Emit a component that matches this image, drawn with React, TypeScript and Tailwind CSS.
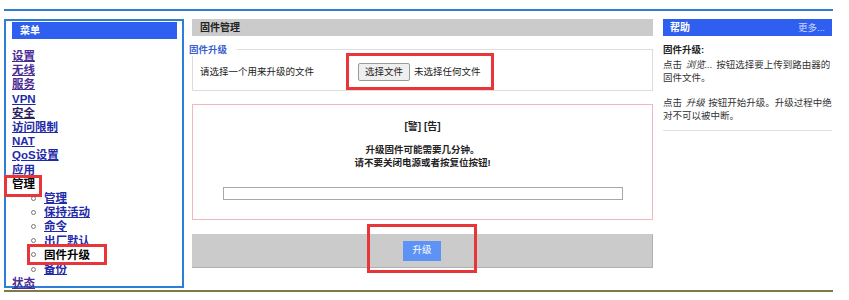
import React from "react";

interface MenuItem {
  label: string;
  color: string;
}

const topItems: MenuItem[] = [
  { label: "设置", color: "text-[#4a2d94]" },
  { label: "无线", color: "text-[#4a2d94]" },
  { label: "服务", color: "text-[#4a2d94]" },
  { label: "VPN", color: "text-[#1f2aa8]" },
  { label: "安全", color: "text-[#2e1f5e]" },
  { label: "访问限制", color: "text-[#1f2aa8]" },
  { label: "NAT", color: "text-[#1f2aa8]" },
  { label: "QoS设置", color: "text-[#1f2aa8]" },
  { label: "应用", color: "text-[#1f2aa8]" },
];

const subItems = ["管理", "保持活动", "命令", "出厂默认", "固件升级", "备份"];

const font = "font-['Liberation_Sans','Noto_Sans_CJK_SC',sans-serif]";

const Sidebar = () => {
  return (
    <div className="w-[180px] h-[269px] ml-[4px] border-2 border-[#2b7fd6] pl-[6px] pr-[5px] pt-[1px]">
      <div className="h-[17px] bg-[#2f5ff0] text-white font-bold text-[10px] leading-[17px] pl-[8px]">
        菜单
      </div>
      <ul className="mt-[10px] text-[11.5px] leading-[14.2px] font-bold">
        {topItems.map((item) => (
          <li key={item.label}>
            <a href="#" className={`underline ${item.color}`}>
              {item.label}
            </a>
          </li>
        ))}
        <li className="text-black">管理</li>
        {subItems.map((s) => (
          <li key={s} className="flex items-center">
            <span className="ml-[19px] w-[5px] h-[5px] rounded-full border border-[#777]" />
            {s === "固件升级" ? (
              <span className="ml-[8px] text-black">{s}</span>
            ) : (
              <a href="#" className="ml-[8px] underline text-[#1f2aa8]">
                {s}
              </a>
            )}
          </li>
        ))}
        <li>
          <a href="#" className="underline text-[#4a2d94]">
            状态
          </a>
        </li>
      </ul>
    </div>
  );
};

const Main = () => {
  return (
    <div className="w-[461px] ml-[8px] text-[9.5px] text-[#222]">
      <div className="h-[17px] bg-[#cbcbcb] font-bold text-[10px] leading-[17px] pl-[8px]">
        固件管理
      </div>
      <fieldset className="mt-[7px] h-[48px] border border-[#dcdcdc] px-[7px]">
        <legend className="-ml-[11px] pr-[10px] leading-[13px] font-bold text-[#3a5fd0]">
          固件升级
        </legend>
        <div className="flex items-center h-[18px] mt-[7px]">
          <span className="w-[158px]">请选择一个用来升级的文件</span>
          <button className="h-[18px] px-[6px] bg-[#efefef] border border-[#9a9a9a] rounded-[2px] text-[9.5px] text-[#222]">
            选择文件
          </button>
          <span className="ml-[4px]">未选择任何文件</span>
        </div>
      </fieldset>
      <div className="mt-[13px] h-[116px] border border-[#f2b6c0] flex flex-col items-center pt-[15px]">
        <div className="font-bold text-[10px] leading-[13px]">[警] [告]</div>
        <div className="mt-[10px] font-bold leading-[13px] text-center">
          <div>升级固件可能需要几分钟。</div>
          <div>请不要关闭电源或者按复位按钮!</div>
        </div>
        <div className="mt-[18px] w-[400px] h-[13px] border border-[#a8a8a8] bg-white" />
      </div>
      <div className="mt-[14px] h-[34px] bg-[#cbcbcb] border-b border-r border-[#b0b0b0] flex items-center justify-center">
        <button className="w-[38px] h-[20px] bg-[#5c93f5] text-white text-[9.5px]">
          升级
        </button>
      </div>
    </div>
  );
};

const Help = () => {
  return (
    <div className="w-[169px] ml-[10px] text-[9.5px] text-[#333] leading-[13px]">
      <div className="h-[17px] bg-[#2f5ff0] flex items-center justify-between px-[7px]">
        <span className="text-white font-bold text-[10px]">帮助</span>
        <span className="text-[#c9d6ff]">更多...</span>
      </div>
      <div className="mt-[7px] font-bold text-[#222]">固件升级:</div>
      <p className="mt-[2px]">
        点击 <i className="px-[1px]">浏览...</i> 按钮选择要上传到路由器的固件文件。
      </p>
      <p className="mt-[12px] pb-[8px] border-b border-[#e2e2e2]">
        点击 <i className="px-[1px]">升级</i> 按钮开始升级。升级过程中绝对不可以被中断。
      </p>
    </div>
  );
};

const App = () => {
  return (
    <div className={`relative w-[849px] h-[300px] bg-white overflow-hidden ${font}`}>
      <div className="ml-[4px] mt-[9px] w-[829px] h-[2px] bg-[#2f7fd0]" />
      <div className="flex mt-[8px]">
        <Sidebar />
        <Main />
        <Help />
      </div>
      <div className="ml-[4px] mt-[2px] w-[829px] h-[2px] bg-[#7a7a4c]" />

      {/* red annotation boxes */}
      <div className="absolute left-[4px] top-[175px] w-[38px] h-[22px] border-[3px] border-[#e8353a]" />
      <div className="absolute left-[27px] top-[244px] w-[80px] h-[21px] border-[3px] border-[#e8353a]" />
      <div className="absolute left-[346px] top-[53px] w-[148px] h-[37px] border-[3px] border-[#e8353a]" />
      <div className="absolute left-[367px] top-[224px] w-[110px] h-[49px] border-[3px] border-[#e8353a]" />
    </div>
  );
};

export default App;
